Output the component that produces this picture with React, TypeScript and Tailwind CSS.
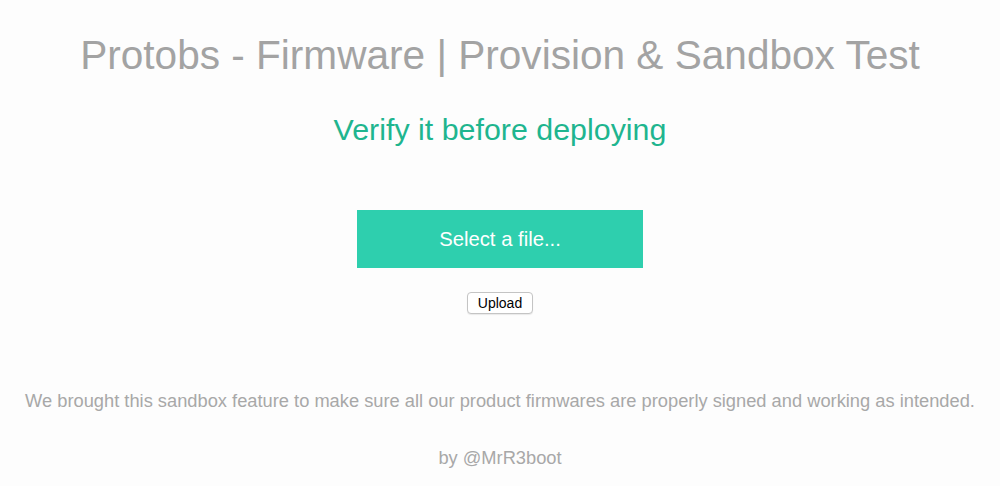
export default function App() {
  return (
    <div className="min-h-[486px] w-full bg-[#fdfdfd] font-['Liberation_Sans',Arial,sans-serif] text-center flex flex-col items-center">
      <h1 className="mt-[31px] text-[40.6px] leading-[48px] text-[#a3a3a3]">
        Protobs - Firmware | Provision &amp; Sandbox Test
      </h1>
      <h2 className="mt-[32px] text-[30.4px] leading-[36px] text-[#1fb58f]">Verify it before deploying</h2>
      <label className="mt-[63px] w-[286px] h-[58px] bg-[#2ecfae] text-white text-[20.3px] flex items-center justify-center cursor-pointer">
        Select a file...
      </label>
      <button className="mt-[24px] h-[22px] px-[10px] text-[14px] leading-none text-black bg-white border border-[#c4c4c4] rounded-[4px] shadow-[0_1px_1px_rgba(0,0,0,0.08)]">
        Upload
      </button>
      <p className="mt-[76px] text-[18.3px] leading-[22px] text-[#a8a8a8]">
        We brought this sandbox feature to make sure all our product firmwares are properly signed and working as intended.
      </p>
      <p className="mt-[35px] text-[18.3px] leading-[22px] text-[#a8a8a8]">by @MrR3boot</p>
    </div>
  );
}
